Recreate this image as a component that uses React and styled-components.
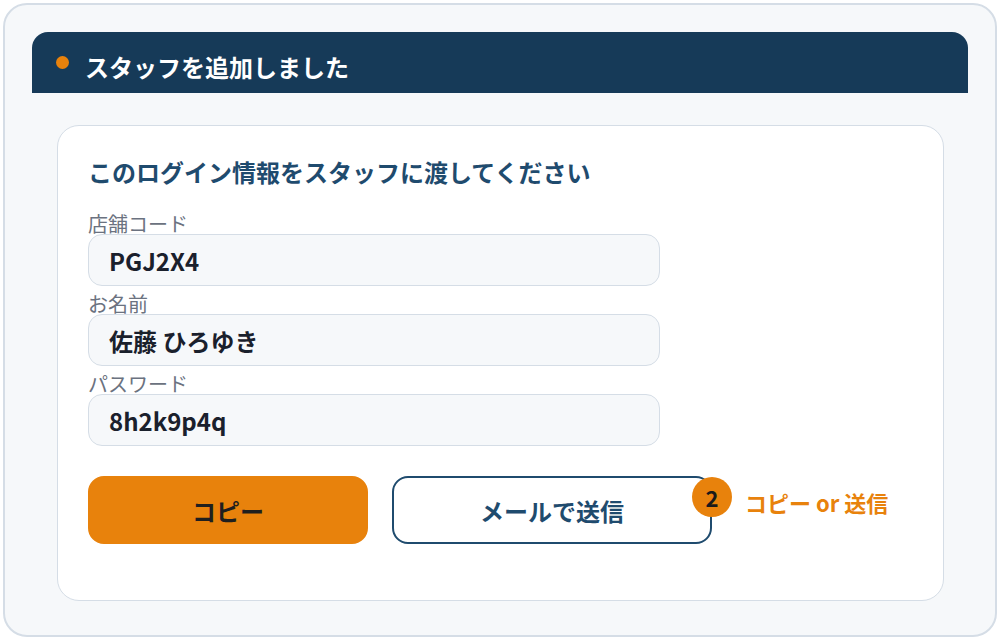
import styled, { createGlobalStyle } from 'styled-components';

const GlobalStyle = createGlobalStyle`
    html, body {
        margin: 0;
        padding: 0;
        background: #ffffff;
    }
    body {
        padding: 3px;
        font-family: 'Noto Sans CJK JP', 'Noto Sans', sans-serif;
    }
    * {
        box-sizing: border-box;
    }
`;

const fields = [
    { label: '店舗コード', value: 'PGJ2X4' },
    { label: 'お名前', value: '佐藤 ひろゆき' },
    { label: 'パスワード', value: '8h2k9p4q' },
];

export default function App() {
    return (
        <>
            <GlobalStyle />
            <Frame>
                <HeaderBar>
                    <Dot />
                    <HeaderTitle>スタッフを追加しました</HeaderTitle>
                </HeaderBar>
                <Card>
                    <CardTitle>このログイン情報をスタッフに渡してください</CardTitle>
                    <Fields>
                        {fields.map((f) => (
                            <Field key={f.label}>
                                <Label>{f.label}</Label>
                                <ValueBox>{f.value}</ValueBox>
                            </Field>
                        ))}
                    </Fields>
                    <Actions>
                        <Button primary>コピー</Button>
                        <Button>
                            メールで送信
                            <Badge>2</Badge>
                        </Button>
                        <Hint>コピー or 送信</Hint>
                    </Actions>
                </Card>
            </Frame>
        </>
    );
}

const Frame = styled.div`
    width: 994px;
    height: 634px;
    padding: 27px;
    border: 2px solid #d5dde6;
    border-radius: 24px;
    background-color: #f6f8fa;
`;

const HeaderBar = styled.div`
    display: flex;
    align-items: center;
    gap: 16px;
    height: 61px;
    padding: 0 24px;
    background-color: #163a58;
    border-radius: 16px 16px 0 0;
`;

const Dot = styled.span`
    width: 13px;
    height: 13px;
    border-radius: 50%;
    background-color: #e8820c;
    flex-shrink: 0;
`;

const HeaderTitle = styled.h1`
    margin: 9px 0 0;
    font-size: 24px;
    line-height: 32px;
    font-weight: 700;
    color: #ffffff;
`;

const Card = styled.div`
    margin: 32px 24px 0 25px;
    height: 476px;
    padding: 30px 30px 0;
    background-color: #ffffff;
    border: 1px solid #d5dde6;
    border-radius: 22px;
`;

const CardTitle = styled.h2`
    margin: 0 0 26px;
    font-size: 24px;
    line-height: 32px;
    font-weight: 700;
    color: #1f4b6e;
`;

const Fields = styled.div`
    display: flex;
    flex-direction: column;
    gap: 8px;
    width: 572px;
`;

const Field = styled.div`
    display: flex;
    flex-direction: column;
`;

const Label = styled.span`
    font-size: 20px;
    line-height: 20px;
    color: #6b7280;
`;

const ValueBox = styled.div`
    display: flex;
    align-items: center;
    height: 52px;
    padding: 0 20px;
    background-color: #f6f8fa;
    border: 1px solid #d5dde6;
    border-radius: 14px;
    font-size: 24px;
    font-weight: 700;
    color: #1a202c;
`;

const Actions = styled.div`
    display: flex;
    align-items: flex-start;
    gap: 24px;
    margin-top: 30px;
`;

const Button = styled.button`
    position: relative;
    width: ${(p) => (p.primary ? '280px' : '320px')};
    height: 68px;
    border-radius: 16px;
    border: 2px solid ${(p) => (p.primary ? '#e8820c' : '#1f4b6e')};
    background-color: ${(p) => (p.primary ? '#e8820c' : '#ffffff')};
    color: ${(p) => (p.primary ? '#1f1f1f' : '#1f4b6e')};
    font-family: 'Noto Sans CJK JP', 'Noto Sans', sans-serif;
    font-size: 24px;
    font-weight: 700;
    padding: 0;
    cursor: pointer;
`;

const Badge = styled.span`
    position: absolute;
    top: -1px;
    right: -22px;
    width: 40px;
    height: 40px;
    border-radius: 50%;
    background-color: #e8820c;
    color: #1a1a1a;
    font-size: 22px;
    font-weight: 700;
    display: flex;
    align-items: center;
    justify-content: center;
    line-height: 1;
`;

const Hint = styled.span`
    margin: 11px 0 0 9px;
    font-size: 22px;
    line-height: 30px;
    font-weight: 700;
    color: #e8820c;
`;
